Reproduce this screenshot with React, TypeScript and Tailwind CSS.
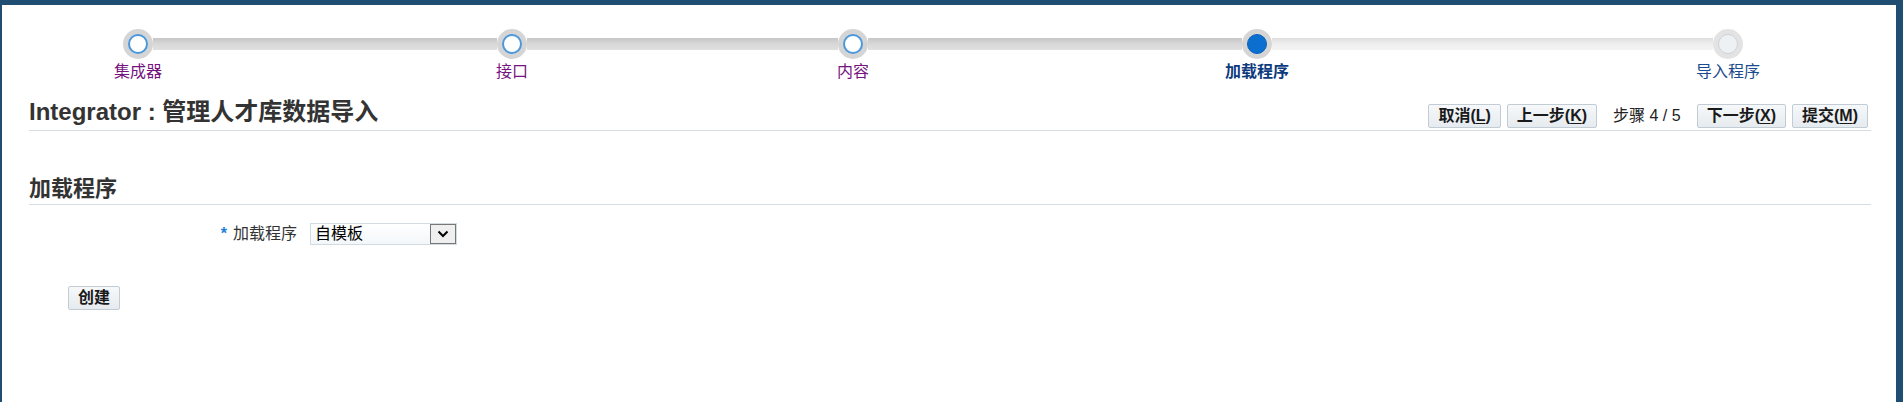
import { ReactNode } from "react"

const FONT = "font-[family-name:Liberation_Sans,Noto_Sans_CJK_SC,sans-serif]"

type StepState = "visited" | "current" | "future"

function TrainNode({ state }: { state: StepState }) {
  const ring = state === "future" ? "bg-[#e3e3e3]" : "bg-[#d5d5d5]"
  const dot =
    state === "visited"
      ? "bg-white border-2 border-[#4b98dc]"
      : state === "current"
        ? "bg-[#0b6fcf] border border-[#0a63ba]"
        : "bg-[#eef1f3] border border-[#cdd4da]"
  return (
    <div className={`flex h-[30px] w-[30px] items-center justify-center rounded-full ${ring}`}>
      <div className={`h-[20px] w-[20px] rounded-full ${dot}`} />
    </div>
  )
}

function Step({ label, state }: { label: string; state: StepState }) {
  const color =
    state === "visited"
      ? "text-[#75137f]"
      : state === "current"
        ? "font-bold text-[#0d3a7d]"
        : "text-[#1a4b8e]"
  return (
    <div className="flex w-[30px] flex-col items-center">
      <TrainNode state={state} />
      <span className={`mt-[3px] whitespace-nowrap text-[16px] leading-[19px] ${color}`}>{label}</span>
    </div>
  )
}

function Track({ width, future }: { width: string; future?: boolean }) {
  const look = future
    ? "bg-gradient-to-b from-[#dedede] via-[#efefef] to-[#f4f4f4]"
    : "bg-gradient-to-b from-[#c6c6c6] via-[#d8d8d8] to-[#e0e0e0]"
  return <div className={`mt-[9px] h-[12px] ${width} ${look}`} />
}

function Button({ children }: { children: ReactNode }) {
  return (
    <button className="h-[24px] rounded-[2px] border border-[#c2ccd5] bg-gradient-to-b from-[#f6f8fa] to-[#e6ebef] px-[9px] text-[16px] font-bold leading-[20px] text-[#1a1a1a]">
      {children}
    </button>
  )
}

function Key({ k }: { k: string }) {
  return (
    <>
      (<span className="underline underline-offset-2">{k}</span>)
    </>
  )
}

export default function App() {
  return (
    <div className={`h-[402px] w-full bg-[#1f4e72] pb-0 pl-[2px] pr-[7px] pt-[5px] ${FONT}`}>
      <div className="h-full bg-white pl-[27px] pr-[25px]">
        {/* train */}
        <div className="flex items-start pl-[94px] pt-[24px]">
          <Step label="集成器" state="visited" />
          <Track width="w-[344px]" />
          <Step label="接口" state="visited" />
          <Track width="w-[311px]" />
          <Step label="内容" state="visited" />
          <Track width="w-[374px]" />
          <Step label="加载程序" state="current" />
          <Track width="w-[441px]" future />
          <Step label="导入程序" state="future" />
        </div>

        {/* page header */}
        <div className="mt-[15px] flex items-end justify-between border-b border-[#d6dde3] pb-[2px]">
          <h1 className="text-[24px] font-bold leading-[32px] text-[#333333]">Integrator : 管理人才库数据导入</h1>
          <div className="mr-[3px] flex items-center">
            <Button>
              取消<Key k="L" />
            </Button>
            <div className="ml-[6px]">
              <Button>
                上一步<Key k="K" />
              </Button>
            </div>
            <span className="mx-[16px] text-[16px] leading-[20px] text-[#222]">步骤 4 / 5</span>
            <Button>
              下一步<Key k="X" />
            </Button>
            <div className="ml-[6px]">
              <Button>
                提交<Key k="M" />
              </Button>
            </div>
          </div>
        </div>

        {/* section */}
        <div className="mt-[45px] border-b border-[#d6dde3] pb-[2px]">
          <h2 className="text-[22px] font-bold leading-[26px] text-[#333333]">加载程序</h2>
        </div>

        <div className="mt-[18px] flex items-center">
          <div className="flex w-[268px] items-center justify-end text-[16px] leading-[20px] text-[#333333]">
            <span className="mr-[6px] font-bold text-[#1f7fd8]">*</span>
            加载程序
          </div>
          <div className="ml-[13px] flex h-[22px] w-[147px] items-center justify-between border border-[#d3dbe2] bg-gradient-to-b from-white to-[#f3f7fa]">
            <span className="pl-[4px] text-[16px] leading-[20px] text-black">自模板</span>
            <div className="flex h-[20px] w-[26px] items-center justify-center border border-[#777777] bg-[#efefef]">
              <svg width="12" height="8" viewBox="0 0 12 8">
                <path d="M1.5 1.5 L6 6 L10.5 1.5" fill="none" stroke="#000" strokeWidth="2" />
              </svg>
            </div>
          </div>
        </div>

        <div className="ml-[39px] mt-[41px]">
          <Button>创建</Button>
        </div>
      </div>
    </div>
  )
}
